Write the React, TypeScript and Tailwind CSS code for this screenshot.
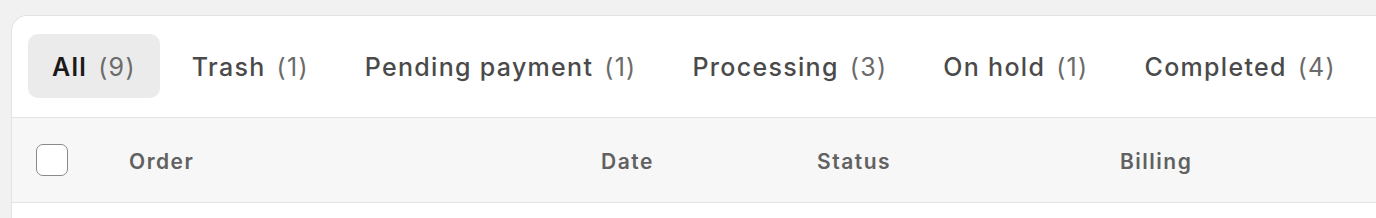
const tabs = [
  { label: 'All', count: 9, active: true },
  { label: 'Trash', count: 1 },
  { label: 'Pending payment', count: 1 },
  { label: 'Processing', count: 3 },
  { label: 'On hold', count: 1 },
  { label: 'Completed', count: 4 },
];

export default function App() {
  return (
    <div className="h-[218px] bg-[#f1f1f1] pl-[11px] pt-[15px] overflow-hidden" style={{ fontFamily: 'Inter, "Noto Sans", sans-serif' }}>
      <div className="w-[1400px] bg-white border-l border-t border-[#e3e3e3] rounded-tl-[16px] h-[220px]">
        {/* Status tabs */}
        <div className="flex items-center gap-2 px-4 pt-[18px] pb-[18px]">
          {tabs.map((t) => (
            <button
              key={t.label}
              className={
                'h-16 px-[24px] pt-[3px] rounded-[10px] flex items-center gap-[11px] text-[25px] tracking-[1.3px] ' +
                (t.active ? 'bg-[#ebebeb]' : '')
              }
            >
              <span className={t.active ? 'font-semibold text-[#1a1a1a]' : 'font-medium text-[#4a4a4a]'}>{t.label}</span>
              <span className="font-normal text-[#6b6b6b]">({t.count})</span>
            </button>
          ))}
        </div>

        {/* Table header */}
        <div className="flex items-center h-[86px] pt-[3px] mt-[1px] bg-[#f7f7f7] border-y border-[#e3e3e3] text-[21px] tracking-[1.5px] font-semibold text-[#616161]">
          <div className="w-[93px] pl-6 flex items-center">
            <span className="w-8 h-8 -mt-[3px] rounded-[7px] border-[1.5px] border-[#8a8a8a] bg-white" />
          </div>
          <div className="w-[472px] pl-6">Order</div>
          <div className="w-[216px] pl-6">Date</div>
          <div className="w-[303px] pl-6">Status</div>
          <div className="pl-6">Billing</div>
        </div>
      </div>
    </div>
  );
}
